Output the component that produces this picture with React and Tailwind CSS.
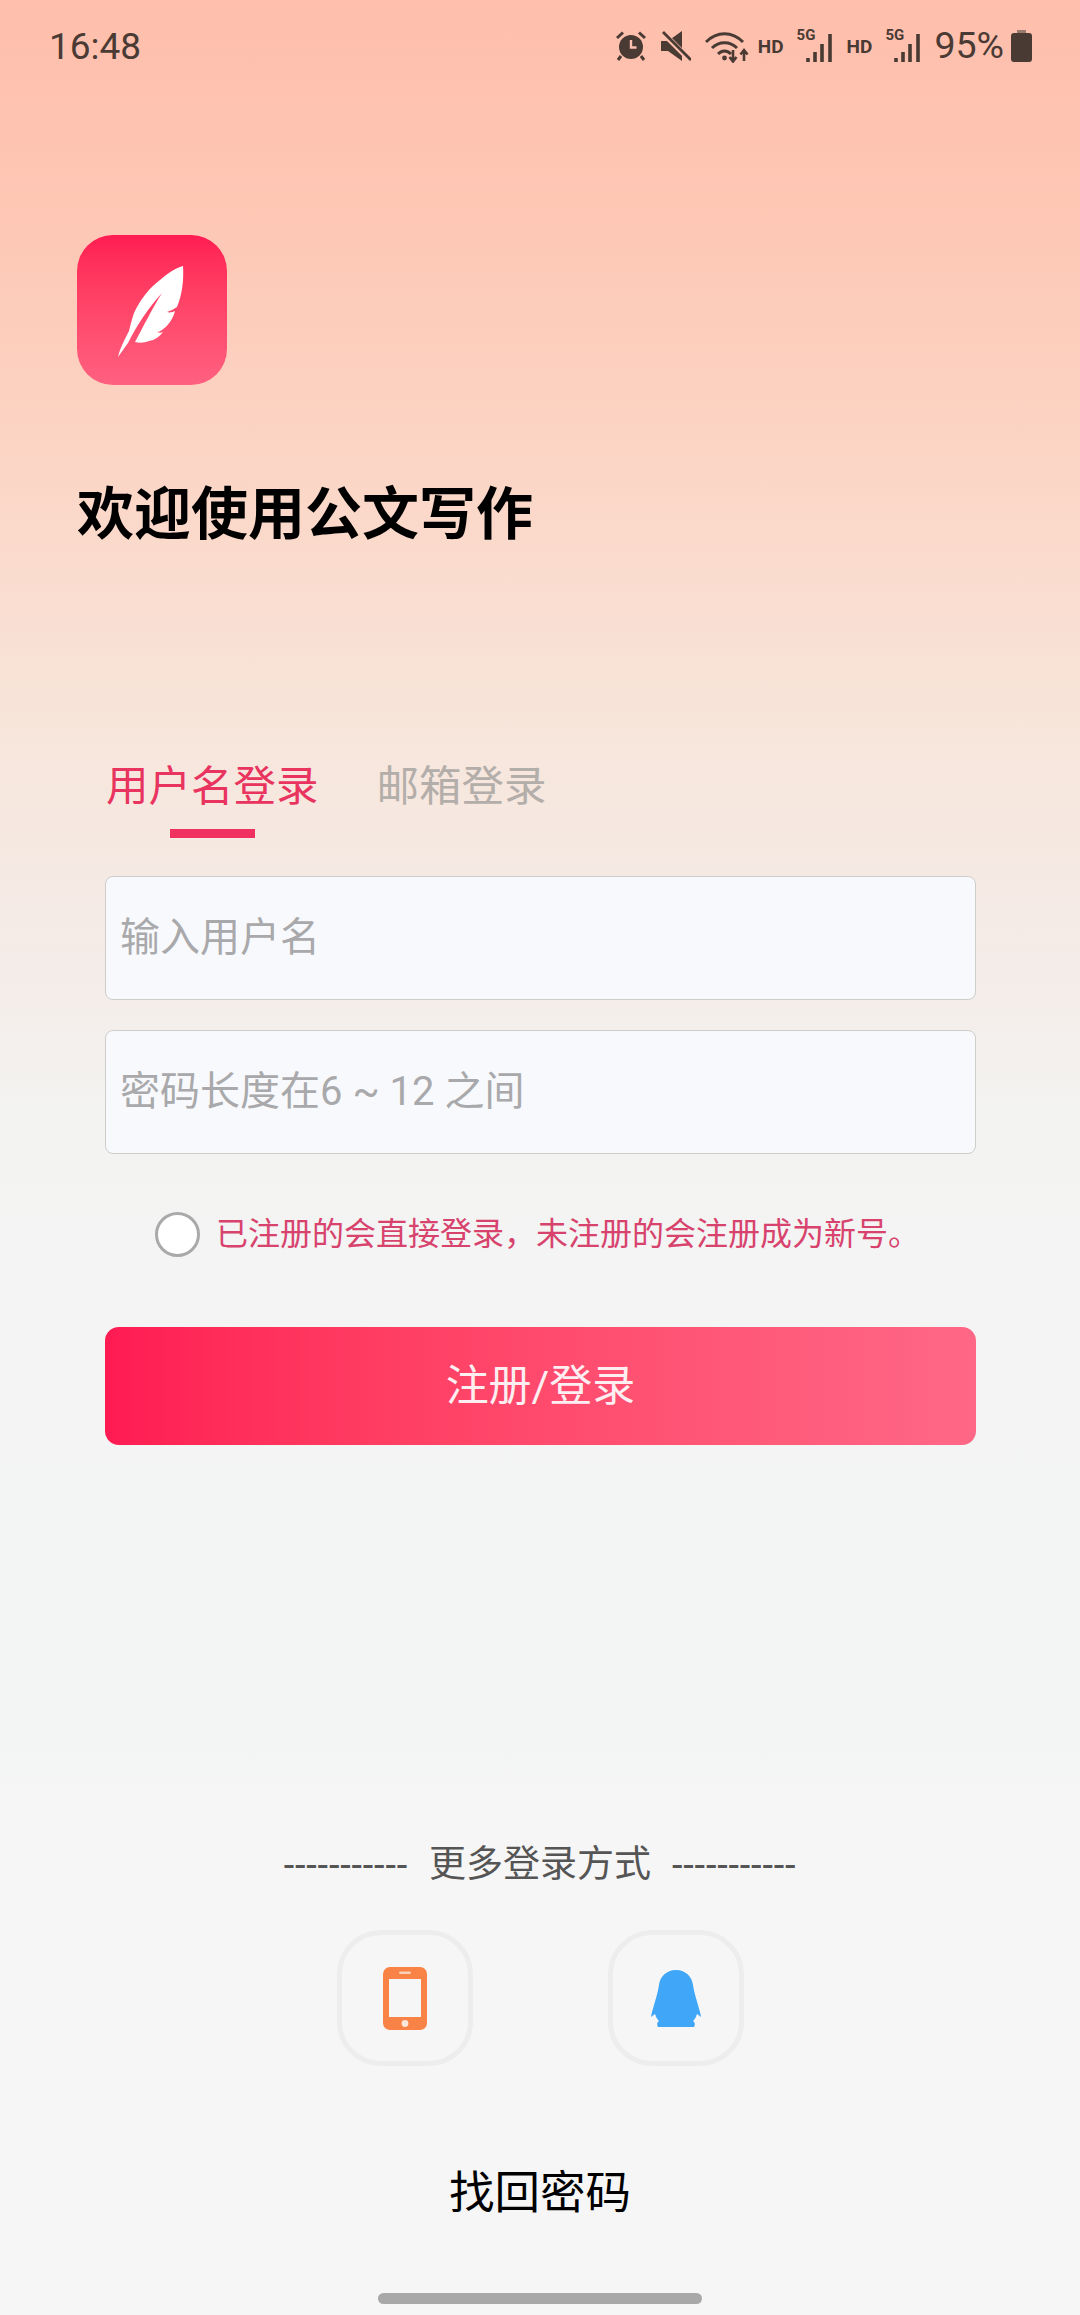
import React from "react";

// Status bar glyphs
function AlarmIcon() {
  return (
    <svg width="30" height="30" viewBox="0 0 30 30" className="block">
      <circle cx="15" cy="16" r="12" fill="#4a3a34" />
      <path d="M15 9v7.5h5.5" stroke="#ffc0ae" strokeWidth="2.4" fill="none" />
      <path d="M1 7 7 1.5M29 7 23 1.5M5 25l-3 4M25 25l3 4" stroke="#4a3a34" strokeWidth="3" fill="none" />
    </svg>
  );
}

function MuteIcon() {
  return (
    <svg width="30" height="30" viewBox="0 0 30 30" className="block">
      <path d="M0 10h7L21 0v30L7 20H0z" fill="#4a3a34" />
      <path d="M1 1l28 28" stroke="#ffc0ae" strokeWidth="5.5" />
      <path d="M2 1l28 28" stroke="#4a3a34" strokeWidth="2.8" />
    </svg>
  );
}

function WifiIcon() {
  return (
    <svg width="44" height="33" viewBox="0 0 44 33" className="block">
      <g fill="none" stroke="#4a3a34" strokeWidth="3">
        <path d="M1 12C12 1 27 1 38 12" />
        <path d="M7 18C14 11 25 11 32 18" />
        <path d="M13 24c4-4 9-4 13 0" />
      </g>
      <circle cx="19.5" cy="28" r="2.4" fill="#4a3a34" />
      <path d="M28 20v11M24.5 27l3.5 4.5 3.5-4.5M39 31V20M35.5 24.5 39 20l3.5 4.5" fill="none" stroke="#4a3a34" strokeWidth="2.6" />
    </svg>
  );
}

function NetworkIcon() {
  return (
    <div className="relative w-[37px] h-[31px]">
      <span className="absolute left-0 top-[-3px] text-[15px] leading-[15px] font-bold text-[#4a3a34]">5G</span>
      <svg width="28" height="29" viewBox="0 0 28 29" className="absolute left-[9px] top-[2px]">
        <path d="M2 25v4M9 19v10M16 11v18M24 1v28" stroke="#4a3a34" strokeWidth="3.6" fill="none" />
      </svg>
    </div>
  );
}

function BatteryIcon() {
  return (
    <svg width="21" height="32" viewBox="0 0 21 32" className="block">
      <path d="M6 0h9v4H6z" fill="#9a7a6e" />
      <rect x="0" y="3" width="21" height="29" rx="3" fill="#4a3a34" />
    </svg>
  );
}

function StatusBar() {
  return (
    <div className="h-[92px] flex items-center justify-between pl-[49px] pr-[48px] text-[#4a3a34]">
      <span className="text-[37px] leading-none">16:48</span>
      <div className="flex items-center">
        <AlarmIcon />
        <div className="ml-[15px]"><MuteIcon /></div>
        <div className="ml-[14px]"><WifiIcon /></div>
        <span className="ml-[9px] text-[19px] font-bold leading-none">HD</span>
        <div className="ml-[13px]"><NetworkIcon /></div>
        <span className="ml-[13px] text-[19px] font-bold leading-none">HD</span>
        <div className="ml-[13px]"><NetworkIcon /></div>
        <span className="ml-[12px] text-[37.5px] leading-none">95%</span>
        <div className="ml-[7px]"><BatteryIcon /></div>
      </div>
    </div>
  );
}

// App mark: white quill on a pink tile
function QuillLogo() {
  return (
    <div className="w-[150px] h-[150px] rounded-[36px] bg-gradient-to-b from-[#ff1b52] to-[#ff6080] flex items-center justify-center">
      <svg width="150" height="150" viewBox="0 0 150 150" className="block">
        <path
          d="M41 122C43 113 48 104 52 96C54 88 55 84 57 78C63 65 72 53 83 45C90 39 98 33 106 31C107 45 105 60 100 72C97 74 93 76 90 77C93 78 96 77 98 76C96 84 91 91 85 95C83 96 82 97 80 97C82 98 84 98 86 97C82 102 78 105 72 106C67 108 62 108 58 107C66 92 75 74 85 58C72 72 60 90 51 108L41 122Z"
          fill="#fff"
        />
      </svg>
    </div>
  );
}

function Field({ children }) {
  return (
    <div className="h-[124px] rounded-[8px] border border-[#cfcdca] bg-[#f8f9fd] flex items-center pl-[14px] text-[40px] leading-none text-[#a9a9ab]">
      {children}
    </div>
  );
}

function PhoneGlyph() {
  return (
    <svg width="44" height="63" viewBox="0 0 44 63" className="block">
      <rect width="44" height="63" rx="7" fill="#f98347" />
      <rect x="6" y="12" width="32" height="38" fill="#f6f6f6" />
      <rect x="16" y="4.5" width="12" height="2.5" rx="1.2" fill="#fdd0b8" />
      <circle cx="22" cy="56.5" r="3.4" fill="#fbe6da" />
    </svg>
  );
}

function PenguinGlyph() {
  return (
    <svg width="50" height="57" viewBox="0 0 50 57" className="block">
      <path
        d="M25 0C35 0 41 7 42 15C43 22 45 28 47 35C48 39 49.5 43 50 47L46 44C45 47 44 49 42 51C44 52 44.5 55 43 57L7 57C5.5 55 6 52 8 51C6 49 5 47 4 44L0 47C.5 43 2 39 3 35C5 28 7 22 8 15C9 7 15 0 25 0Z"
        fill="#3fa6f8"
      />
    </svg>
  );
}

function LoginTile({ children }) {
  return (
    <div className="w-[136px] h-[136px] rounded-[44px] border-[5px] border-[#ededed] flex items-center justify-center">
      {children}
    </div>
  );
}

export default function App() {
  return (
    <div className="w-[1080px] h-[2315px] overflow-hidden flex flex-col font-['Roboto','Noto_Sans_CJK_SC',sans-serif] bg-[linear-gradient(180deg,#ffbeac_0%,#fdc8b5_10%,#fbd8c9_22%,#f7e6dc_32%,#f4ebe7_41%,#f3f3f1_48%,#f3f4f3_54%,#f3f4f4_75%,#f6f6f6_78%,#f6f6f6_100%)]">
      <StatusBar />

      <div className="ml-[77px] mt-[143px]">
        <QuillLogo />
      </div>

      <h1 className="ml-[77px] mt-[92px] text-[57px] leading-[76px] font-semibold text-black">欢迎使用公文写作</h1>

      <div className="ml-[105px] mr-[104px] mt-[204px]">
        <div className="ml-[1px] flex text-[42.5px] leading-[60px]">
          <div className="flex flex-col items-center">
            <span className="text-[#e8345f]">用户名登录</span>
            <div className="mt-[12px] w-[85px] h-[9px] bg-[#f0305e]" />
          </div>
          <span className="ml-[58px] text-[#b3aeaa]">邮箱登录</span>
        </div>

        <div className="mt-[38px] flex flex-col gap-[30px]">
          <Field>输入用户名</Field>
          <Field>密码长度在6 ~ 12 之间</Field>
        </div>

        <div className="mt-[57px] ml-[50px] flex items-center h-[46px]">
          <div className="w-[45px] h-[45px] rounded-full border-[3px] border-[#a9a9a9] bg-white" />
          <span className="ml-[16px] text-[32px] leading-none whitespace-nowrap text-[#d8436e]">已注册的会直接登录，未注册的会注册成为新号。</span>
        </div>

        <div className="mt-[70px] h-[118px] rounded-[14px] bg-gradient-to-r from-[#ff1a52] to-[#ff6786] flex items-center justify-center text-[43px] leading-none text-[#fdeef2]">
          注册/登录
        </div>
      </div>

      <div className="mt-[397px] flex items-center justify-center text-[37px] leading-[46px] text-[#555555]">
        <span className="text-[38px] tracking-[0.8px]">-----------</span>
        <span className="mx-[21px]">更多登录方式</span>
        <span className="text-[38px] tracking-[0.8px]">-----------</span>
      </div>

      <div className="mt-[42px] flex justify-center gap-[135px]">
        <LoginTile><PhoneGlyph /></LoginTile>
        <LoginTile><PenguinGlyph /></LoginTile>
      </div>

      <div className="mt-[98px] text-center text-[45.5px] leading-[60px] text-black">找回密码</div>

      <div className="mt-[69px] mx-auto w-[324px] h-[11px] rounded-full bg-[#a8a8a8]" />
    </div>
  );
}
